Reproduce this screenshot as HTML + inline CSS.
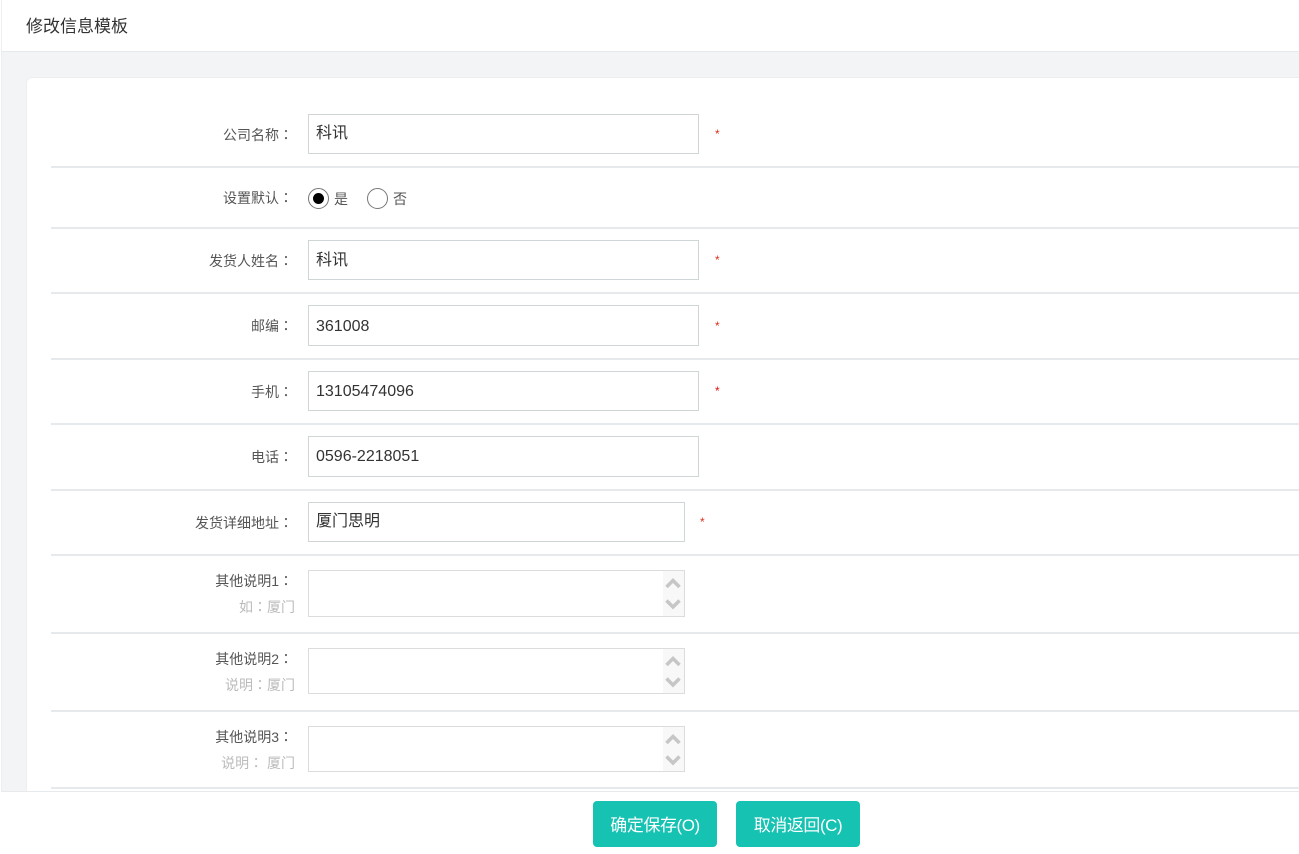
<!DOCTYPE html>
<html lang="zh-CN"><head><meta charset="utf-8"><title>修改信息模板</title>
<style>
*{box-sizing:border-box}
html,body{margin:0;padding:0}
body{width:1299px;height:854px;overflow:hidden;position:relative;background:#fff;font-family:"Liberation Sans","Noto Sans CJK SC",sans-serif;color:#555}
div,span{position:absolute;white-space:nowrap}
b{font-weight:normal;font-family:"Noto Sans CJK TC",sans-serif}
#bg{left:1px;top:0;width:1298px;height:854px;background:#f3f4f6;border-left:1px solid #eee}
#head{left:1px;top:0;width:1298px;height:52px;background:#fff;border-bottom:1px solid #e7eaec;border-left:1px solid #eee}
#title{left:26px;top:16px;font-size:17px;line-height:22px;color:#333}
#card{left:26px;top:77px;width:1280px;height:720px;background:#fff;border:1px solid #eceef0;border-radius:6px}
.ln{left:51px;width:1248px;height:2px;background:#e7eaec}
.lb{right:1006px;font-size:14px;line-height:18px;color:#555}
.sub{right:1004px;font-size:14px;line-height:18px;color:#bbb}
.ip{left:308px;width:391px;background:#fff;border:1px solid #cfd6d8;font-size:16px;color:#333;padding-left:7px}
.st{font-size:12px;line-height:14px;color:#d9331c}
.ta{left:308px;width:377px;background:#fff;border:1px solid #dcdcdc}
.sb{right:0;top:0;bottom:0;width:21px;background:#f8f8f8}
.sb svg{position:absolute;left:0;top:0}
.rd{width:21px;height:21px;border:1px solid #777;border-radius:50%;background:#fff}
.rd i{position:absolute;left:4px;top:4px;width:11px;height:11px;background:#000;border-radius:50%}
.rt{font-size:14px;line-height:18px;color:#555}
#foot{left:1px;top:791px;width:1298px;height:63px;background:#fff;border-top:1px solid #e7eaec}
.btn{top:801px;height:46px;background:#16c2b2;border-radius:4px;color:#fff;font-size:17px;line-height:50px;text-align:center;letter-spacing:-.45px}
</style></head><body>
<div id="bg"></div>
<div id="head"></div>
<div id="title">修改信息模板</div>
<div id="card"></div>

<div class="ln" style="top:166px"></div>
<div class="ln" style="top:227px"></div>
<div class="ln" style="top:292px"></div>
<div class="ln" style="top:358px"></div>
<div class="ln" style="top:423px"></div>
<div class="ln" style="top:489px"></div>
<div class="ln" style="top:554px"></div>
<div class="ln" style="top:632px"></div>
<div class="ln" style="top:710px"></div>
<div class="ln" style="top:787px"></div>

<div class="lb" style="top:126px">公司名称<b lang="zh-TW">：</b></div>
<div class="ip" style="top:114px;height:40px;line-height:38px">科讯</div>
<span class="st" style="left:715px;top:127px">*</span>

<div class="lb" style="top:189px">设置默认<b lang="zh-TW">：</b></div>
<div class="rd" style="left:308px;top:188px"><i></i></div>
<span class="rt" style="left:334px;top:190px">是</span>
<div class="rd" style="left:367px;top:188px"></div>
<span class="rt" style="left:393px;top:190px">否</span>

<div class="lb" style="top:252px">发货人姓名<b lang="zh-TW">：</b></div>
<div class="ip" style="top:240px;height:40px;line-height:40px">科讯</div>
<span class="st" style="left:715px;top:253px">*</span>

<div class="lb" style="top:317px">邮编<b lang="zh-TW">：</b></div>
<div class="ip" style="top:305px;height:41px;line-height:42px">361008</div>
<span class="st" style="left:715px;top:319px">*</span>

<div class="lb" style="top:383px">手机<b lang="zh-TW">：</b></div>
<div class="ip" style="top:371px;height:40px;line-height:40px">13105474096</div>
<span class="st" style="left:715px;top:384px;color:#e01010">*</span>

<div class="lb" style="top:448px">电话<b lang="zh-TW">：</b></div>
<div class="ip" style="top:436px;height:41px;line-height:40px">0596-2218051</div>

<div class="lb" style="top:514px">发货详细地址<b lang="zh-TW">：</b></div>
<div class="ip" style="top:502px;height:40px;width:377px;line-height:37px">厦门思明</div>
<span class="st" style="left:700px;top:515px">*</span>

<div class="lb" style="top:572px">其他说明1<b lang="zh-TW">：</b></div>
<div class="sub" style="top:598px">如<b lang="zh-TW">：</b>厦门</div>
<div class="ta" style="top:570px;height:47px"><div class="sb"><svg width="21" height="45" fill="none" stroke="#c6c6c6" stroke-width="3.500"><path d="M3.500 16L10 9.500 16.500 16"/><path d="M3.500 29.500L10 36 16.500 29.500"/></svg></div></div>

<div class="lb" style="top:650px">其他说明2<b lang="zh-TW">：</b></div>
<div class="sub" style="top:676px">说明<b lang="zh-TW">：</b>厦门</div>
<div class="ta" style="top:648px;height:46px"><div class="sb"><svg width="21" height="44" fill="none" stroke="#c6c6c6" stroke-width="3.500"><path d="M3.500 16L10 9.500 16.500 16"/><path d="M3.500 29.500L10 36 16.500 29.500"/></svg></div></div>

<div class="lb" style="top:728px">其他说明3<b lang="zh-TW">：</b></div>
<div class="sub" style="top:754px">说明<b lang="zh-TW">：</b> 厦门</div>
<div class="ta" style="top:726px;height:46px"><div class="sb"><svg width="21" height="44" fill="none" stroke="#c6c6c6" stroke-width="3.500"><path d="M3.500 16L10 9.500 16.500 16"/><path d="M3.500 29.500L10 36 16.500 29.500"/></svg></div></div>

<div id="foot"></div>
<div class="btn" style="left:593px;width:124px">确定保存(O)</div>
<div class="btn" style="left:736px;width:124px">取消返回(C)</div>
</body></html>
